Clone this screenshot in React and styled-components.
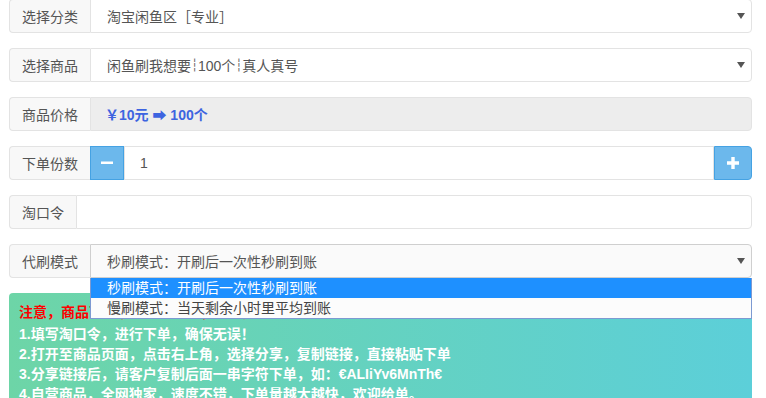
import React from "react";
import styled, { createGlobalStyle } from "styled-components";

const Global = createGlobalStyle`
  html, body { margin: 0; padding: 0; background: #fff; overflow: hidden; }
  body { font-family: "Liberation Sans", "Noto Sans CJK SC", sans-serif; font-size: 14px; color: #555; }
  * { box-sizing: border-box; }
`;

const Page = styled.div`
  margin: -1px 14px 0 9px;
  display: flex;
  flex-direction: column;
  gap: 15px;
`;

const Group = styled.div`
  position: relative;
  display: flex;
  height: 34px;
`;

const Addon = styled.div`
  display: flex;
  align-items: center;
  padding: 0 12px;
  background: #f8f8f8;
  border: 1px solid #e3e3e3;
  border-right: 0;
  border-radius: 4px 0 0 4px;
  color: #555;
  white-space: nowrap;
`;

const Field = styled.div`
  flex: 1;
  display: flex;
  align-items: center;
  padding-left: ${(p) => p.$pad || 16}px;
  background: ${(p) => p.$bg || "#fff"};
  border: 1px solid ${(p) => p.$border || "#e3e3e3"};
  border-radius: ${(p) => (p.$square ? "0" : "0 4px 4px 0")};
  color: #555;
  white-space: nowrap;
  position: relative;
`;

const Sep = styled.span`
  display: inline-block;
  width: 7px;
  overflow: hidden;
  text-align: center;
  font-family: "DejaVu Sans", sans-serif;
  font-size: 12px;
  color: #666;
`;

const Caret = styled.span`
  position: absolute;
  right: 6px;
  top: 50%;
  margin-top: -3px;
  width: 0;
  height: 0;
  border-left: 4px solid transparent;
  border-right: 4px solid transparent;
  border-top: 6px solid #555;
`;

const Price = styled.span`
  color: #3d64e0;
  font-weight: bold;
`;

const StepButton = styled.div`
  width: ${(p) => p.$w}px;
  display: flex;
  align-items: center;
  justify-content: center;
  background: #6cb8ec;
  border: 1px solid #45a2e3;
  border-radius: ${(p) => p.$radius};
`;

const Dropdown = styled.div`
  position: absolute;
  left: 81px;
  right: 0;
  top: 34px;
  background: #fcfcfc;
  border: 1px solid #7d9ad2;
  border-top: 0;
  z-index: 5;
`;

const Option = styled.div`
  height: 20px;
  line-height: 20px;
  padding-left: 16px;
  background: ${(p) => (p.$active ? "#1e90ff" : "transparent")};
  color: ${(p) => (p.$active ? "#fff" : "#444")};
  white-space: nowrap;
`;

const Notice = styled.div`
  background: linear-gradient(90deg, #6dd5a7 0%, #5ccfd9 100%);
  border-radius: 4px 4px 0 0;
  padding: 9px 10px 10px;
  color: #fff;
  font-weight: bold;
  font-size: 14px;
  line-height: 20px;
  height: 120px;
`;

const Warn = styled.div`
  color: #ff0000;
  margin-bottom: 2px;
`;

const Line = styled.div`
  white-space: nowrap;
`;

export default function App() {
  return (
    <>
      <Global />
      <Page>
        <Group>
          <Addon>选择分类</Addon>
          <Field>
            淘宝闲鱼区［专业］
            <Caret />
          </Field>
        </Group>
        <Group>
          <Addon>选择商品</Addon>
          <Field>
            闲鱼刷我想要<Sep>┆</Sep>100个<Sep>┆</Sep>真人真号
            <Caret />
          </Field>
        </Group>
        <Group>
          <Addon>商品价格</Addon>
          <Field $bg="#ededed" $pad={14}>
            <Price>￥10元 ➡ 100个</Price>
          </Field>
        </Group>
        <Group>
          <Addon>下单份数</Addon>
          <StepButton $w={34} $radius="0">
            <svg width="12" height="4" viewBox="0 0 12 4">
              <rect x="0" y="0.5" width="12" height="2.5" fill="#fff" />
            </svg>
          </StepButton>
          <Field $square $pad={15}>1</Field>
          <StepButton $w={38} $radius="0 4px 4px 0">
            <svg width="12" height="12" viewBox="0 0 12 12">
              <path d="M4.3 0h3.4v4.3H12v3.4H7.7V12H4.3V7.7H0V4.3h4.3z" fill="#fff" />
            </svg>
          </StepButton>
        </Group>
        <Group>
          <Addon>淘口令</Addon>
          <Field />
        </Group>
        <Group>
          <Addon>代刷模式</Addon>
          <Field $bg="#fafafa" $border="#cfcfcf">
            秒刷模式：开刷后一次性秒刷到账
            <Caret />
          </Field>
          <Dropdown>
            <Option $active>秒刷模式：开刷后一次性秒刷到账</Option>
            <Option>慢刷模式：当天剩余小时里平均到账</Option>
          </Dropdown>
        </Group>
        <Notice>
          <Warn>注意，商品下单后请耐心等待，勿重复下单！</Warn>
          <Line>1.填写淘口令，进行下单，确保无误！</Line>
          <Line>2.打开至商品页面，点击右上角，选择分享，复制链接，直接粘贴下单</Line>
          <Line>3.分享链接后，请客户复制后面一串字符下单，如：€ALIiYv6MnTh€</Line>
          <Line>4.自营商品，全网独家，速度不错，下单量越大越快，欢迎给单。</Line>
        </Notice>
      </Page>
    </>
  );
}
